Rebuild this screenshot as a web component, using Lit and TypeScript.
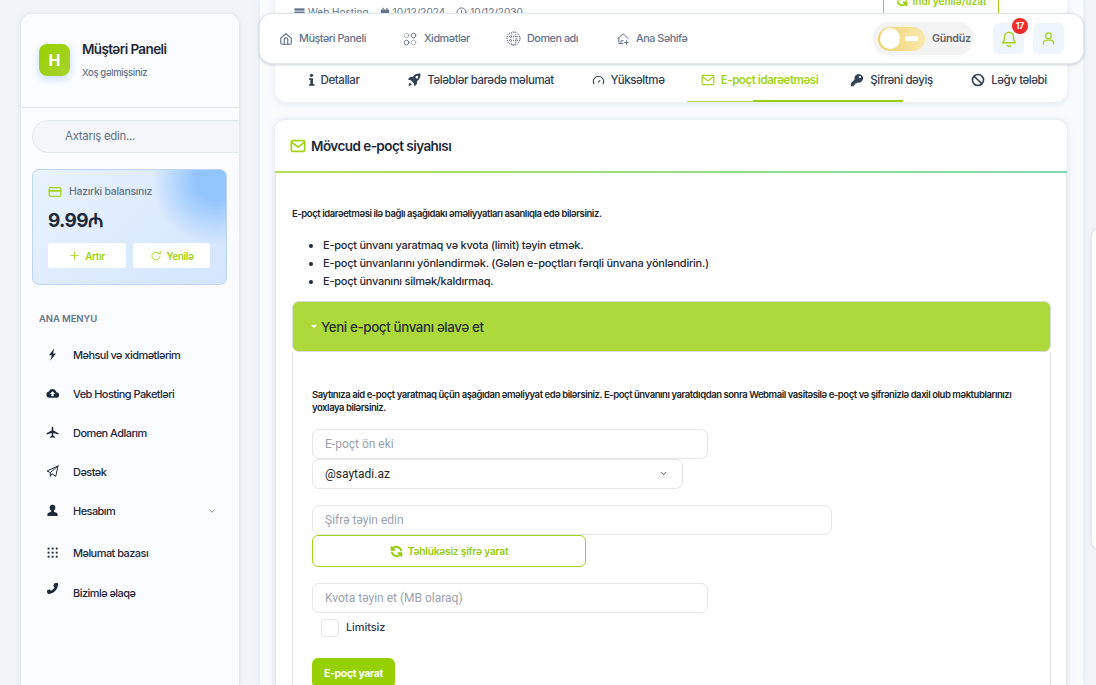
import { LitElement, html, css, svg } from "lit";
import { customElement } from "lit/decorators.js";

const ic = (body: unknown, size = 16, vb = "0 0 24 24", cls = "", w?: number) =>
  html`<svg class=${cls} width=${w ?? size} height=${size} viewBox=${vb} fill="none" stroke="currentColor" stroke-width="2" stroke-linecap="round" stroke-linejoin="round">${body}</svg>`;

const icons = {
  bolt: svg`<path fill="currentColor" stroke="none" d="M15 1 5.500 13.500h5.200L8 23 18.500 10H13z"/>`,
  cloud: svg`<path fill="currentColor" stroke="none" d="M19.300 9.600A7.500 7.500 0 0 0 5.200 8.200 6 6 0 0 0 6 20h13a5 5 0 0 0 .3-10.400zM14 13v4h-4v-4H7l5-5 5 5z"/>`,
  plane: svg`<path fill="currentColor" stroke="none" d="M23 15.500v-2l-9.500-5V3a1.500 1.500 0 0 0-3 0v5.500L1 13.500v2l9.500-2.700V18l-2.800 2V22l4.300-1.200 4.300 1.200v-2l-2.800-2v-5.200z"/>`,
  send: svg`<path d="M22 2 2 11l6 3 14-12zM22 2l-4 19-7-5-3 5v-7" stroke-width="1.800"/>`,
  user: svg`<path fill="currentColor" stroke="none" d="M12 1.500a5.200 5.200 0 0 1 5.200 5.200c0 2.300-1 4.300-2.700 5.800v1.500c0 1 3 1.300 5 2.300 1.200.6 1.800 1.500 1.800 2.700v3H2.700v-3c0-1.200.6-2.100 1.800-2.700 2-1 5-1.300 5-2.300v-1.500C7.800 11 6.800 9 6.800 6.700A5.200 5.200 0 0 1 12 1.500z"/>`,
  grid: svg`<g fill="currentColor" stroke="none">${[3, 10.500, 18].flatMap((y) => [3, 10.500, 18].map((x) => svg`<rect x=${x} y=${y} width="3.500" height="3.500"/>`))}</g>`,
  phone: svg`<path fill="currentColor" stroke="none" d="M20.500 1.500c1 .3 1.800 1 1.800 2C22.300 13.500 14 21.500 4.500 22c-1 0-1.800-.5-2-1.500L1.800 17c-.1-.7.200-1.300.8-1.600L6 13.900c.6-.2 1.200-.1 1.600.4L9.200 16.200a14 14 0 0 0 6.600-6.700L14 8c-.5-.4-.6-1-.4-1.600L15.100 3c.3-.6.900-.9 1.600-.8z"/>`,
  home: svg`<path d="M3 10.500 12 3l9 7.500V19a2 2 0 0 1-2 2H5a2 2 0 0 1-2-2z"/><path d="M9 21v-8a3 3 0 0 1 6 0v8"/>`,
  mail: svg`<rect x="2" y="4" width="20" height="16" rx="2"/><path d="m2.500 6.500 9.500 7 9.500-7"/>`,
  key: svg`<path fill="currentColor" stroke="none" d="M15 1.500a7.500 7.500 0 0 0-7.200 9.600L1.500 17.400V22.500h5.100V20h2.500v-2.500h2.500l1.300-1.300A7.500 7.500 0 1 0 15 1.500zm2 7.500a2 2 0 1 1 0-4 2 2 0 0 1 0 4z"/>`,
  rocket: svg`<path fill="currentColor" stroke="none" d="M23 1c-5.500-.5-10.500 1-13.500 6H5L1.500 11l5 1.500 5 5L13 22.500l4-3.500v-4.500C22 11.500 23.500 6.500 23 1zm-6 8.500a2.300 2.300 0 1 1 0-4.600 2.300 2.300 0 0 1 0 4.600zM5 16.500c-1.500 1-2.200 3-2.200 5.200 2.200 0 4.200-.7 5.200-2.200z"/>`,
  gauge: svg`<path d="M3.500 18a9.500 9.500 0 1 1 17 0"/><path d="m12 15 2.500-3"/>`,
  ban: svg`<circle cx="12" cy="12" r="9.500" stroke-width="2.800"/><path d="m5.500 5.500 13 13" stroke-width="2.800"/>`,
  card: svg`<rect x="2" y="4.500" width="20" height="15" rx="2"/><path d="M2 10h20" stroke-width="3"/>`,
  refresh: svg`<path d="M20 12a8 8 0 1 1-2.500-5.800" stroke-width="1.700"/><path d="M20.500 2.500v4.500H16" stroke-width="1.700"/>`,
  sync: svg`<path d="M20.500 10A9 9 0 0 0 5 6.500L3 9m0-5.500V9h5.500M3.500 14A9 9 0 0 0 19 17.500l2-2.500m0 5.500V15h-5.500" stroke-width="3.600"/>`,
  plus: svg`<path d="M12 4v16M4 12h16" stroke-width="1.800"/>`,
  bell: svg`<path d="M18 9a6 6 0 0 0-12 0c0 6-2.500 8-2.500 8h17S18 15 18 9zM10 20.500a2.200 2.200 0 0 0 4 0" stroke-width="1.700"/>`,
  person: svg`<circle cx="12" cy="7.500" r="4.500"/><path d="M4 21v-1.500a5 5 0 0 1 5-5h6a5 5 0 0 1 5 5V21"/>`,
  info: svg`<g fill="currentColor" stroke="none"><circle cx="12" cy="4" r="2.800"/><path d="M8 9h6.500v10H17v3H8v-3h2v-7H8z"/></g>`,
  server: svg`<g fill="currentColor" stroke="none"><rect x="1" y="3" width="22" height="5"/><rect x="1" y="10" width="22" height="5"/><rect x="1" y="17" width="22" height="5"/></g>`,
  cal: svg`<g fill="currentColor" stroke="none"><rect x="2" y="6" width="20" height="16" rx="1"/><rect x="6" y="2" width="3" height="4"/><rect x="15" y="2" width="3" height="4"/></g>`,
};

const circles = svg`<g stroke-width="1.500"><circle cx="6" cy="6" r="4" opacity=".55"/><circle cx="18" cy="6" r="4"/><circle cx="6" cy="18" r="4"/><circle cx="18" cy="18" r="4" opacity=".55"/></g>`;
const globe = svg`<g stroke-width="1.800" stroke-linecap="butt"><circle cx="12" cy="12" r="10.500" stroke-dasharray="1.500 1.700"/><ellipse cx="12" cy="12" rx="4.500" ry="10.500" stroke-dasharray="1.500 1.700"/><path d="M1.500 9h21M1.500 15h21" stroke-dasharray="1.500 1.700"/></g>`;
const homeplus = svg`<path d="M3 11.500 12 3l9 8.500M5 10v10h7M8.500 20v-5h4" stroke-width="1.700"/><path d="M18 15v6M15 18h6" stroke-width="1.700"/>`;
const chevron = svg`<path d="m6 9 6 6 6-6"/>`;

@customElement("app-root")
export class AppRoot extends LitElement {
  static styles = css`
    :host { display: block; height: 685px; overflow: hidden; background: #f1f5f9; font-family: Inter, "Noto Sans", sans-serif; color: #1e293b; }
    * { box-sizing: border-box; }
    svg { display: block; flex: none; }
    .page { display: flex; height: 685px; padding-left: 20px; position: relative; overflow: hidden; }

    .side { width: 220px; flex: none; margin-top: 13px; background: #fbfcff; border: 1px solid #e6ebf2; border-bottom: 0; border-radius: 12px 12px 0 0; box-shadow: 0 1px 4px rgba(148,163,184,.18); overflow: hidden; }
    .brand { height: 94px; display: flex; align-items: flex-start; padding: 27px 18px 0; gap: 12px; border-bottom: 1px solid #e2e8f0; }
    .logo { width: 31px; height: 32px; margin-top: 3px; border-radius: 8px; background: linear-gradient(135deg, #97d000, #a8d32e); color: #fff; font-size: 16px; font-weight: 700; display: grid; place-items: center; box-shadow: 0 3px 8px rgba(96,165,250,.35); }
    .brand h1 { margin: 0; font-size: 13.500px; line-height: 17px; font-weight: 600; color: #1e293b; letter-spacing: -.6px; white-space: nowrap; }
    .brand p { margin: 8px 0 0; font-size: 9.500px; line-height: 13px; font-weight: 500; color: #64748b; letter-spacing: -.35px; }
    .search { margin: 12px -20px 0 11px; height: 33px; border: 1px solid #e2e8f0; border-radius: 16px; background: #f4f6f9; padding-left: 32px; font-size: 11.500px; line-height: 30px; color: #64748b; letter-spacing: -.3px; width: 240px; }
    .bal { position: relative; overflow: hidden; margin: 16px 12px 0 11px; width: 195px; height: 116px; border: 1px solid #bcd6f8; border-radius: 7px; background: linear-gradient(135deg, #eaf3fe 0%, #dceafd 55%, #d3e5fd 100%); padding: 15px; }
    .bal::after { content: ""; position: absolute; right: -55px; top: -55px; width: 130px; height: 130px; border-radius: 50%; background: radial-gradient(circle, #93c5fd 22%, rgba(147,197,253,0) 70%); }
    .bal-top { display: flex; align-items: center; gap: 7px; font-size: 10.500px; line-height: 14px; color: #64748b; font-weight: 500; letter-spacing: -.3px; }
    .lime { color: #a3d417; }
    .amount { margin-top: 10px; font-size: 19px; line-height: 24px; font-weight: 700; color: #1e293b; letter-spacing: -.7px; }
    .manat { font-family: "Liberation Sans", "DejaVu Sans", sans-serif; font-size: 19px; }
    .bal-btns { display: flex; gap: 7px; margin-top: 10px; position: relative; z-index: 1; }
    .bal-btn { height: 25px; background: #fff; border-radius: 3px; display: flex; align-items: center; justify-content: center; gap: 5px; color: #9fd313; font-size: 10px; font-weight: 600; letter-spacing: -.4px; }
    .b1 { width: 78px; } .b2 { width: 77px; }
    .label { margin: 28px 0 0 18px; font-size: 9.500px; line-height: 12px; font-weight: 600; color: #64748b; letter-spacing: -.1px; }
    .nav { margin-top: 10px; display: flex; flex-direction: column; }
    .nav a { display: flex; align-items: center; height: 39px; padding-left: 25px; gap: 14px; font-size: 11px; font-weight: 500; color: #1e293b; letter-spacing: -.55px; }
    .nav a.tall { height: 45px; }
    .nav a.last { height: 35px; }
    .nav a .chev { margin-left: auto; margin-right: 22px; color: #64748b; }
    .up { position: relative; top: -4px; }

    .main { flex: none; width: 823px; margin-left: 20px; height: 685px; position: relative; background: #f8fafc; box-shadow: 0 0 6px rgba(148,163,184,.15); }
    .scroll { padding: 0 16px 0 15px; margin-top: -29px; }
    .topcard { height: 131px; background: #fff; border-radius: 0 0 12px 12px; box-shadow: 0 2px 6px rgba(148,163,184,.2); position: relative; display: flex; flex-direction: column; justify-content: flex-end; }
    .meta { position: absolute; left: 19px; top: 34px; display: flex; gap: 11px; font-size: 10px; line-height: 14px; color: #64748b; align-items: center; }
    .metaitem { display: flex; align-items: center; gap: 3px; }
    .renew { position: absolute; left: 608px; top: 12px; width: 116px; height: 36px; border: 1px solid #a3d417; border-top: 0; font-size: 10px; font-weight: 600; color: #9bd00e; display: flex; align-items: flex-end; justify-content: center; gap: 5px; padding-bottom: 11px; white-space: nowrap; }
    .tabs { display: flex; height: 39px; }
    .tab { display: flex; align-items: center; justify-content: center; gap: 6px; font-size: 11.500px; font-weight: 500; letter-spacing: -.43px; color: #334155; white-space: nowrap; position: relative; padding-bottom: 5px; }
    .tab.on { color: #a3d417; font-weight: 600; }
    .tab.on::after { content: ""; position: absolute; left: 0; width: 216px; bottom: 0; height: 1px; background: #b5df3f; }
    .tab.on::before { content: ""; position: absolute; left: 66px; width: 150px; bottom: 0; height: 2px; background: #9bd00e; z-index: 1; }

    .head { position: absolute; left: -1px; top: 13px; width: 825px; height: 51px; background: #fff; border: 1px solid #e2e8f0; border-radius: 13px; box-shadow: 0 1px 3px rgba(100,116,139,.3); display: flex; align-items: center; padding-left: 19px; z-index: 3; }
    .hl { display: flex; align-items: center; gap: 6px; font-size: 10.800px; font-weight: 500; color: #64748b; letter-spacing: -.45px; white-space: nowrap; }
    .hr { margin-left: auto; display: flex; align-items: center; }
    .toggle { width: 100px; height: 33px; margin-right: 20px; display: flex; align-items: center; gap: 7px; background: #f3f3f3; border-radius: 17px; padding-left: 5px; font-size: 10.800px; font-weight: 600; color: #666; letter-spacing: -.35px; box-shadow: 0 0 6px rgba(0,0,0,.04); }
    .track { width: 47px; height: 24px; flex: none; border-radius: 12px; background: linear-gradient(90deg, #f0d16c, #faeab0); position: relative; }
    .knob { position: absolute; left: 2px; top: 1px; width: 20px; height: 21px; border-radius: 50%; background: #fff; }
    .dash { position: absolute; right: 7px; top: 9px; width: 13px; height: 5px; border-radius: 3px; background: #fff; }
    .sq { width: 31px; height: 31px; border-radius: 6px; background: #eef5fd; color: #a3d417; display: grid; place-items: center; position: relative; }
    .sq + .sq { margin-left: 9px; margin-right: 19px; }
    .badge { position: absolute; top: -5px; right: -4px; width: 16px; height: 16px; border-radius: 50%; background: #f02b2b; color: #fff; font-size: 8.500px; font-weight: 700; display: grid; place-items: center; }

    .card { margin-top: 18px; background: #fff; border-radius: 10px 10px 0 0; box-shadow: 0 0 6px rgba(148,163,184,.28); min-height: 600px; }
    .card-h { height: 51px; display: flex; align-items: center; padding-left: 15px; gap: 5px; font-size: 13.500px; font-weight: 600; color: #1e293b; letter-spacing: -.55px; }
    .bar { height: 2px; background: linear-gradient(90deg, #b6de56, #7fd9b0); }
    .card-b { padding: 0 15px 0 16px; border-left: 1px solid #e5e7eb; border-right: 1px solid #e5e7eb; }
    .intro { margin: 0; padding-top: 35px; font-size: 9.500px; line-height: 12px; font-weight: 600; color: #212529; letter-spacing: -.42px; }
    ul { margin: 16px 0 0; padding-left: 31px; font-size: 11px; line-height: 18px; font-weight: 500; color: #1f2937; letter-spacing: -.25px; }
    .acc { margin-top: 11px; height: 51px; background: #add93a; border: 1px solid #d7dbe0; border-radius: 7px; display: flex; align-items: center; padding-left: 18px; gap: 4px; font-size: 13.300px; font-weight: 500; color: #2b2f36; letter-spacing: -.35px; }
    .caret { width: 0; height: 0; border: 3px solid transparent; border-top: 3.500px solid #fff; margin-top: 3px; }
    .acc-b { border: 1px solid #e5e7eb; border-top: 0; padding: 36px 19px 0; height: 360px; }
    .desc { margin: 0; font-size: 9.500px; line-height: 13px; font-weight: 600; color: #212529; letter-spacing: -.44px; }
    .inp { height: 30px; border: 1px solid #e5e7eb; border-radius: 7px; display: flex; align-items: center; padding: 0 0 1px 12px; font-family: Roboto, sans-serif; font-size: 12px; color: #9ca3af; background: #fff; }
    .w1 { width: 396px; margin-top: 15px; } .w2 { width: 371px; color: #212529; padding-right: 14px; justify-content: space-between; }
    .w3 { width: 520px; margin-top: 16px; }
    .w4 { width: 396px; margin-top: 16px; }
    .gen { width: 274px; height: 32px; border: 1px solid #a3d417; border-radius: 6px; display: flex; align-items: center; justify-content: center; gap: 5px; font-size: 10.300px; font-weight: 600; letter-spacing: -.25px; color: #97cc10; }
    .chk { display: flex; align-items: center; gap: 7px; margin: 6px 0 0 9px; font-size: 11px; font-weight: 500; color: #334155; letter-spacing: -.1px; }
    .chk span:last-child { margin-top: -2px; }
    .box { width: 18px; height: 18px; border: 1px solid #e5e7eb; border-radius: 3px; }
    .submit { margin-top: 21px; width: 83px; height: 30px; border-radius: 6px; background: #97d000; color: #fff; font-size: 10.500px; font-weight: 700; letter-spacing: -.35px; display: grid; place-items: center; }
    .sliver { position: absolute; right: -12px; top: 229px; width: 16px; height: 320px; background: #fff; border-radius: 8px; box-shadow: 0 0 4px rgba(148,163,184,.3); z-index: 2; }
  `;

  render() {
    const nav: [unknown, string][] = [
      [ic(icons.bolt, 13), "Məhsul və xidmətlərim"],
      [ic(icons.cloud, 13), "Veb Hosting Paketləri"],
      [ic(icons.plane, 13), "Domen Adlarım"],
      [ic(icons.send, 13), "Dəstək"],
    ];
    return html`<div class="page">
      <aside class="side">
        <div class="brand">
          <div class="logo">H</div>
          <div><h1>Müştəri Paneli</h1><p>Xoş gəlmişsiniz</p></div>
        </div>
        <div class="search">Axtarış edin...</div>
        <div class="bal">
          <div class="bal-top"><span class="lime">${ic(icons.card, 14)}</span>Hazırki balansınız</div>
          <div class="amount">9.99<span class="manat">₼</span></div>
          <div class="bal-btns">
            <div class="bal-btn b1">${ic(icons.plus, 11)}<span>Artır</span></div>
            <div class="bal-btn b2">${ic(icons.refresh, 12)}<span>Yenilə</span></div>
          </div>
        </div>
        <div class="label">ANA MENYU</div>
        <nav class="nav">
          ${nav.map(([i, t]) => html`<a>${i}<span>${t}</span></a>`)}
          <a>${ic(icons.user, 13)}<span>Hesabım</span>${ic(chevron, 10, "0 0 24 24", "chev")}</a>
          <a class="tall">${ic(icons.grid, 13)}<span>Məlumat bazası</span></a>
          <a class="last">${ic(icons.phone, 13, "0 0 24 24", "up")}<span>Bizimlə əlaqə</span></a>
        </nav>
      </aside>

      <main class="main">
        <div class="head">
          <div class="hl" style="width:124px">${ic(icons.home, 14)}<span>Müştəri Paneli</span></div>
          <div class="hl" style="width:103px;gap:7px">${ic(circles, 14)}<span>Xidmətlər</span></div>
          <div class="hl" style="width:110px;gap:6px">${ic(globe, 15)}<span>Domen adı</span></div>
          <div class="hl">${ic(homeplus, 14)}<span>Ana Səhifə</span></div>
          <div class="hr">
            <div class="toggle"><div class="track"><div class="knob"></div><div class="dash"></div></div><span>Gündüz</span></div>
            <div class="sq">${ic(icons.bell, 18)}<div class="badge">17</div></div>
            <div class="sq">${ic(icons.person, 15)}</div>
          </div>
        </div>
        <div class="scroll">
          <div class="topcard">
            <div class="meta">
              <span class="metaitem">${ic(icons.server, 11)}Web Hosting</span>
              <span class="metaitem">${ic(icons.cal, 10)}10/12/2024</span>
              <span class="metaitem">${ic(svg`<circle cx="12" cy="12" r="10"/><path d="M12 7v6"/>`, 11)}10/12/2030</span>
            </div>
            <div class="renew">${ic(icons.sync, 12)}<span>İndi yenilə/uzat</span></div>
            <div class="tabs">
              <div class="tab" style="width:117px">${ic(icons.info, 14, "6 0 12 24", "", 7)}<span>Detallar</span></div>
              <div class="tab" style="width:177px">${ic(icons.rocket, 14)}<span>Tələblər barədə məlumat</span></div>
              <div class="tab" style="width:118px">${ic(icons.gauge, 13)}<span>Yüksəltmə</span></div>
              <div class="tab on" style="width:145px">${ic(icons.mail, 14)}<span>E-poçt idarəetməsi</span></div>
              <div class="tab" style="width:119px">${ic(icons.key, 14)}<span>Şifrəni dəyiş</span></div>
              <div class="tab" style="width:116px">${ic(icons.ban, 14)}<span>Ləğv tələbi</span></div>
            </div>
          </div>
          <section class="card">
            <div class="card-h"><span class="lime">${ic(svg`<rect x="2" y="4" width="20" height="16" rx="2" stroke-width="2.600"/><path d="m2.500 6.500 9.500 7 9.500-7" stroke-width="2.600"/>`, 16)}</span>Mövcud e-poçt siyahısı</div>
            <div class="bar"></div>
            <div class="card-b">
              <p class="intro">E-poçt idarəetməsi ilə bağlı aşağıdakı əməliyyatları asanlıqla edə bilərsiniz.</p>
              <ul>
                <li>E-poçt ünvanı yaratmaq və kvota (limit) təyin etmək.</li>
                <li>E-poçt ünvanlarını yönləndirmək. (Gələn e-poçtları fərqli ünvana yönləndirin.)</li>
                <li>E-poçt ünvanını silmək/kaldırmaq.</li>
              </ul>
              <div class="acc"><span class="caret"></span>Yeni e-poçt ünvanı əlavə et</div>
              <div class="acc-b">
                <p class="desc">Saytınıza aid e-poçt yaratmaq üçün aşağıdan əməliyyat edə bilərsiniz. E-poçt ünvanını yaratdıqdan sonra Webmail vasitəsilə e-poçt və şifrənizlə daxil olub məktublarınızı yoxlaya bilərsiniz.</p>
                <div class="inp w1">E-poçt ön eki</div>
                <div class="inp w2"><span>@saytadi.az</span>${ic(chevron, 9)}</div>
                <div class="inp w3">Şifrə təyin edin</div>
                <div class="gen">${ic(icons.sync, 13)}<span>Təhlükəsiz şifrə yarat</span></div>
                <div class="inp w4">Kvota təyin et (MB olaraq)</div>
                <div class="chk"><span class="box"></span><span>Limitsiz</span></div>
                <div class="submit">E-poçt yarat</div>
              </div>
            </div>
          </section>
        </div>
      </main>
      <div class="sliver"></div>
    </div>`;
  }
}
